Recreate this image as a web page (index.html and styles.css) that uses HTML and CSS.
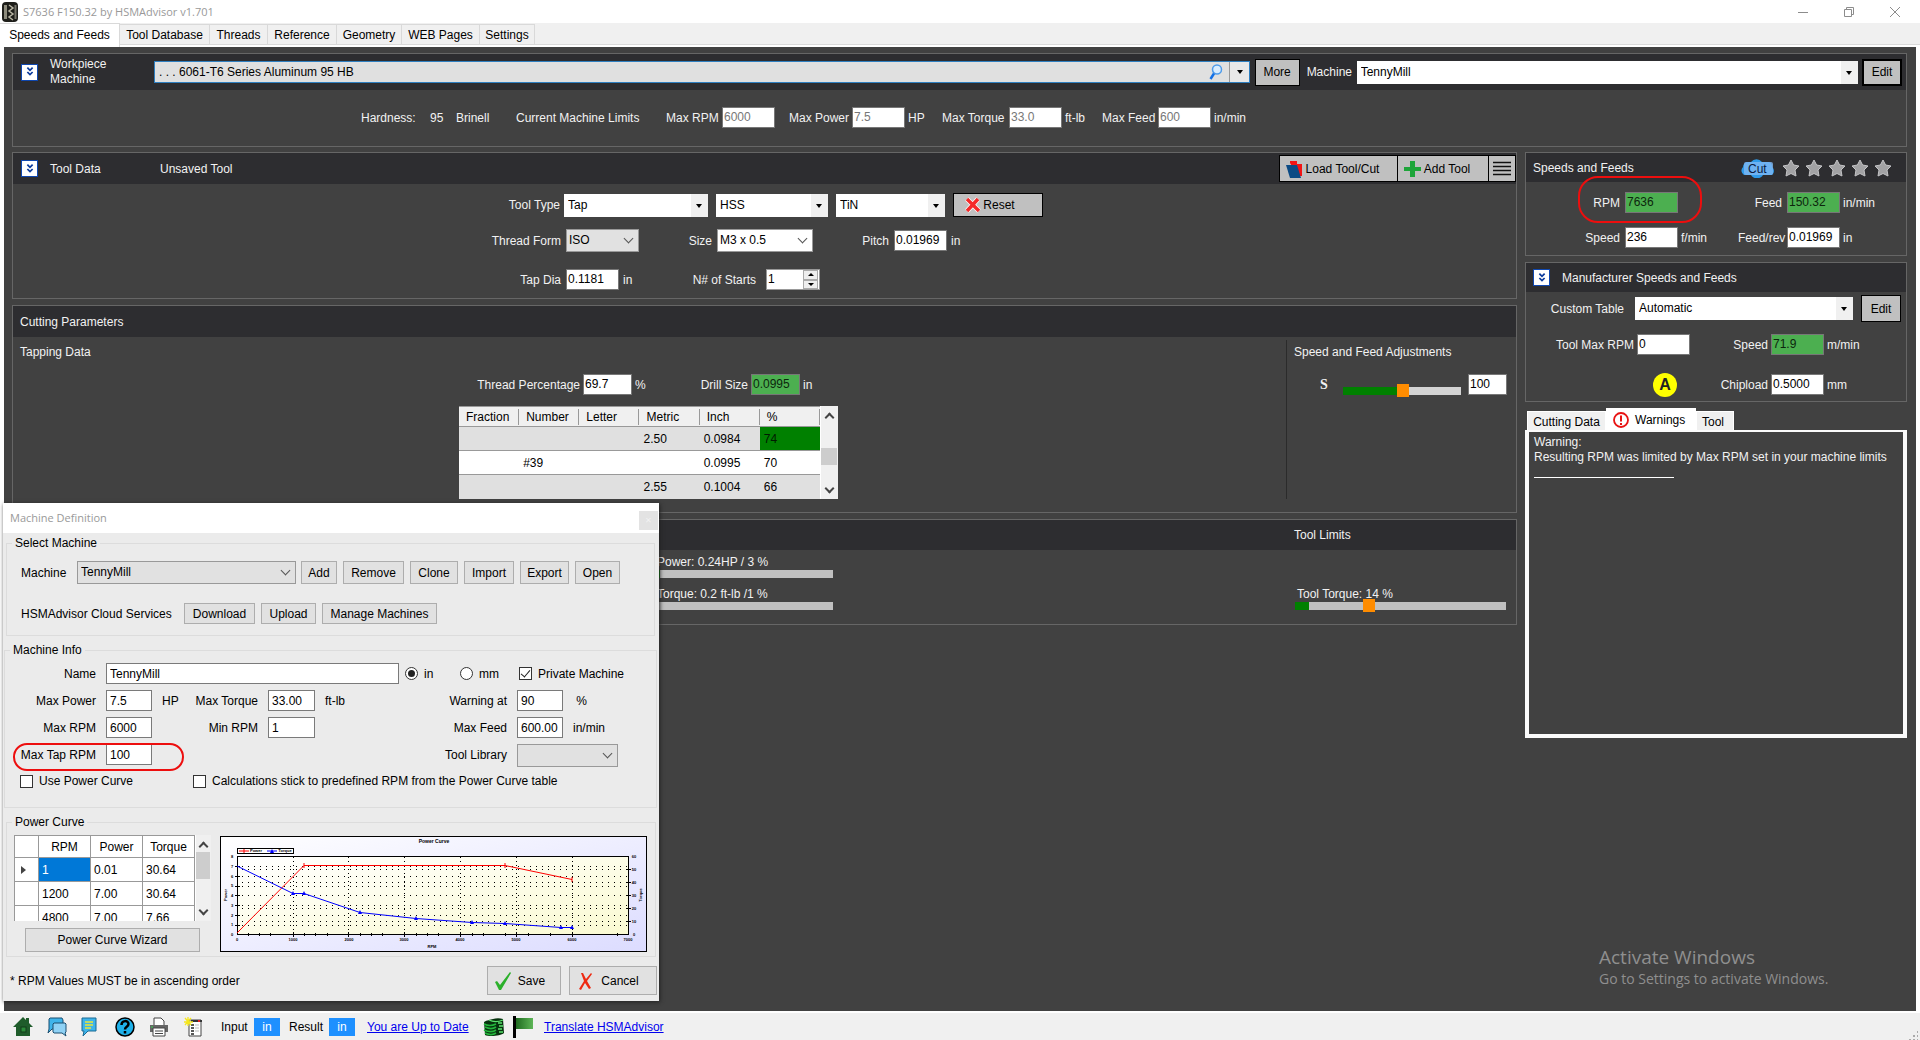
FILE: index.html
```html
<!DOCTYPE html>
<html lang="en">
<head>
<meta charset="utf-8">
<title>S7636 F150.32 by HSMAdvisor v1.701</title>
<link rel="stylesheet" href="styles.css">
</head>
<body>
<svg class="defs" aria-hidden="true">
  <symbol id="chev" viewBox="0 0 16 16"><path d="M5 3l3 3 3-3M5 8l3 3 3-3" fill="none" stroke="#0a3a9c" stroke-width="2"/></symbol>
  <symbol id="star" viewBox="0 0 18 18"><path d="M9 1l2.600 5 5.400 1-4 4 1 6-5-2.500L4 17l1-6-4-4 5.400-1z" fill="#a2a2a4" stroke="#c4c4c6" stroke-linejoin="round"/></symbol>
</svg>
<div class="app">
  <header class="titlebar">
    <svg class="app-icon" width="16" height="20" viewBox="0 0 16 20"><rect width="16" height="20" rx="4" fill="#1e1e1a"/><path d="M2 3h3v14H2z" fill="#8d8b7c"/><path d="M7 3l4 3-4 3 4 3-4 3 4 3" fill="none" stroke="#b9b6a4" stroke-width="1.500"/><path d="M13.500 3v14" stroke="#77756a" stroke-width="2"/></svg>
    <h1>S7636 F150.32 by HSMAdvisor v1.701</h1>
    <div class="window-buttons">
      <button aria-label="Minimize"><svg width="12" height="12"><path d="M1 6.500h10" stroke="#8c8c8c"/></svg></button>
      <button aria-label="Restore"><svg width="12" height="12"><path d="M1.500 3.500h7v7h-7zM3.500 3v-1.500h7v7h-2" fill="none" stroke="#8c8c8c"/></svg></button>
      <button aria-label="Close"><svg width="12" height="12"><path d="M1 1l10 10M11 1L1 11" stroke="#8c8c8c"/></svg></button>
    </div>
  </header>

  <nav class="tabs">
    <a href="#" class="tab active t-speeds">Speeds and Feeds</a>
    <a href="#" class="tab t-db">Tool Database</a>
    <a href="#" class="tab t-threads">Threads</a>
    <a href="#" class="tab t-ref">Reference</a>
    <a href="#" class="tab t-geo">Geometry</a>
    <a href="#" class="tab t-web">WEB Pages</a>
    <a href="#" class="tab t-set">Settings</a>
  </nav>

  <main class="workspace">
    <section class="panel workpiece">
      <div class="panel-head">
        <button class="fold" aria-label="Collapse"><svg width="14" height="14"><use href="#chev"/></svg></button>
        <h2>Workpiece<br>Machine</h2>
        <div class="search">
          <input type="text" aria-label="Material" value=". . . 6061-T6 Series Aluminum 95 HB">
          <svg width="16" height="18" viewBox="0 0 16 18"><circle cx="9" cy="6.500" r="4.500" fill="#d8ecff" stroke="#4d9bea" stroke-width="1.500"/><path d="M6 10.500L2.500 16" stroke="#1471e6" stroke-width="2.500"/></svg>
          <button class="drop" aria-label="Open material list"></button>
        </div>
        <button class="btn w-more">More</button>
        <label class="machine-label" for="machine">Machine</label>
        <span class="combo tri machine-pick"><select id="machine"><option>TennyMill</option></select></span>
        <button class="btn w-edit focus">Edit</button>
      </div>
      <div class="limits">
        <span>Hardness:</span><span>95</span><span>Brinell</span><span>Current Machine Limits</span>
        <label for="l1">Max RPM</label><input id="l1" type="text" value="6000" disabled><span></span>
        <label for="l2">Max Power</label><input id="l2" type="text" value="7.5" disabled><span>HP</span>
        <label for="l3">Max Torque</label><input id="l3" type="text" value="33.0" disabled><span>ft-lb</span>
        <label for="l4">Max Feed</label><input id="l4" type="text" value="600" disabled><span>in/min</span>
      </div>
    </section>

    <div class="columns">
      <div class="left">
        <section class="panel">
          <div class="panel-head head-tool">
            <button class="fold" aria-label="Collapse"><svg width="14" height="14"><use href="#chev"/></svg></button>
            <h2>Tool Data</h2>
            <span class="grow">Unsaved Tool</span>
            <div class="btn-group">
              <button class="btn w-load"><svg width="17" height="18" viewBox="0 0 17 18"><path d="M4 3l0-2 7 0 0 3 5 0 0 12-4 0z" fill="#f21414"/><path d="M0 5l11 0 4 13-11 0z" fill="#0b4a84"/></svg>Load Tool/Cut</button>
              <button class="btn w-add"><svg width="17" height="18" viewBox="0 0 17 18"><path d="M6 1h5v6h6v4h-6v6H6v-6H0V7h6z" fill="#1ea53a"/></svg>Add Tool</button>
              <button class="btn w-menu" aria-label="Menu"><svg width="18" height="15"><path d="M0 1.500h18M0 5.500h18M0 9.500h18M0 13.500h18" stroke="#111" stroke-width="1.500"/></svg></button>
            </div>
          </div>
          <div class="tool-body">
            <div class="tool-row r1">
              <label for="tt">Tool Type</label>
              <span class="combo tri"><select id="tt"><option>Tap</option></select></span>
              <span class="combo tri"><select aria-label="Tool material"><option>HSS</option></select></span>
              <span class="combo tri"><select aria-label="Coating"><option>TiN</option></select></span>
              <button class="btn w-reset"><svg width="16" height="16" viewBox="0 0 16 16"><path d="M2 2l12 12M13 2L2 14" stroke="#fff" stroke-width="5"/><path d="M2 2l12 12M13 2L2 14" stroke="#f52a2a" stroke-width="3.500"/></svg>Reset</button>
            </div>
            <div class="tool-row r2">
              <label for="tf">Thread Form</label>
              <span class="combo flat gray"><select id="tf"><option>ISO</option></select></span>
              <label for="sz">Size</label>
              <span class="combo flat"><select id="sz"><option>M3 x 0.5</option></select></span>
              <label for="pt">Pitch</label>
              <input id="pt" type="text" value="0.01969"><span>in</span>
            </div>
            <div class="tool-row r3">
              <label for="td">Tap Dia</label>
              <input id="td" type="text" value="0.1181"><span>in</span>
              <label for="ns">N# of Starts</label>
              <span class="spinner"><input id="ns" type="text" value="1"><span class="spin-buttons"><button class="up" aria-label="More"></button><button class="down" aria-label="Less"></button></span></span>
            </div>
          </div>
        </section>

        <section class="panel">
          <div class="panel-head head-cut"><h2>Cutting Parameters</h2></div>
          <div class="cut-body">
            <div class="tapping">
              <h3>Tapping Data</h3>
              <div class="tap-row">
                <label for="tp">Thread Percentage</label><input id="tp" type="text" value="69.7"><span>%</span>
                <label for="ds">Drill Size</label><input id="ds" class="result" type="text" value="0.0995"><span>in</span>
              </div>
              <div class="drills">
                <table>
                  <thead><tr><th>Fraction</th><th>Number</th><th>Letter</th><th>Metric</th><th>Inch</th><th>%</th></tr></thead>
                  <tbody>
                    <tr><td></td><td></td><td></td><td>2.50</td><td>0.0984</td><td class="best">74</td></tr>
                    <tr><td></td><td>#39</td><td></td><td></td><td>0.0995</td><td>70</td></tr>
                    <tr><td></td><td></td><td></td><td>2.55</td><td>0.1004</td><td>66</td></tr>
                  </tbody>
                </table>
                <div class="scroll mid"><i></i></div>
              </div>
            </div>
            <div class="adjust">
              <h3>Speed and Feed Adjustments</h3>
              <div class="adjust-row">
                <label for="sl">S</label>
                <input id="sl" class="slider half" type="range" value="51">
                <input type="text" aria-label="Speed percent" value="100">
              </div>
            </div>
          </div>
        </section>

        <section class="panel gauges">
          <div class="panel-head head-gauge"><h2>Tool Limits</h2></div>
          <div class="gauge-body">
            <div class="gauge-col">
              <label for="g1">Power: 0.24HP / 3 %</label><progress id="g1" max="100" value="3"></progress>
              <label for="g2">Torque: 0.2 ft-lb /1 %</label><progress id="g2" max="100" value="1"></progress>
            </div>
            <div class="gauge-tool">
              <label for="g3">Tool Torque: 14 %</label>
              <input id="g3" class="slider low" type="range" value="34">
            </div>
          </div>
        </section>
      </div>

      <aside class="right">
        <section class="panel results">
          <div class="panel-head head-side">
            <h2>Speeds and Feeds</h2>
            <span class="cut"><svg width="34" height="20" viewBox="0 0 34 20"><path d="M3 17a5 5 0 0 1-1-8 5 5 0 0 1 5-5h3a7 7 0 0 1 11 0h7a5 5 0 0 1 3 5 5 5 0 0 1 0 8h-9a7 7 0 0 1-12 0z" fill="#2f9bea"/><rect x="3" y="4" width="29" height="13" rx="2" fill="#80b8f2" opacity=".8"/></svg><b>Cut</b></span>
            <span class="stars"><svg width="18" height="18"><use href="#star"/></svg><svg width="18" height="18"><use href="#star"/></svg><svg width="18" height="18"><use href="#star"/></svg><svg width="18" height="18"><use href="#star"/></svg><svg width="18" height="18"><use href="#star"/></svg></span>
          </div>
          <div class="side-grid sf">
            <label for="a1">RPM</label><input id="a1" class="result" type="text" value="7636"><span></span>
            <label for="a2">Feed</label><input id="a2" class="result" type="text" value="150.32"><span>in/min</span>
            <label for="a3">Speed</label><input id="a3" type="text" value="236"><span>f/min</span>
            <label for="a4">Feed/rev</label><input id="a4" type="text" value="0.01969"><span>in</span>
          </div>
          <div class="mark mark-rpm"></div>
        </section>

        <section class="panel">
          <div class="panel-head head-side">
            <button class="fold" aria-label="Collapse"><svg width="14" height="14"><use href="#chev"/></svg></button>
            <h2>Manufacturer Speeds and Feeds</h2>
          </div>
          <div class="custom">
            <label for="ct">Custom Table</label>
            <span class="combo tri"><select id="ct"><option>Automatic</option></select></span>
            <button class="btn w-edit">Edit</button>
          </div>
          <div class="side-grid mf">
            <label for="b1">Tool Max RPM</label><input id="b1" type="text" value="0">
            <label for="b2">Speed</label><input id="b2" class="result" type="text" value="71.9"><span>m/min</span>
            <button class="auto">A</button>
            <label for="b3">Chipload</label><input id="b3" type="text" value="0.5000"><span>mm</span>
          </div>
        </section>

        <section class="messages">
          <div class="msg-tabs">
            <a href="#" class="m-cut">Cutting Data</a>
            <a href="#" class="m-warn active"><svg width="16" height="16" viewBox="0 0 16 16"><circle cx="8" cy="8" r="7" fill="#fff" stroke="#e81313" stroke-width="1.800"/><path d="M8 3.500v6M8 11v2" stroke="#e81313" stroke-width="2"/></svg>Warnings</a>
            <a href="#" class="m-tool">Tool</a>
          </div>
          <div class="msg-body">
            <p>Warning:</p>
            <p>Resulting RPM was limited by Max RPM set in your machine limits</p>
            <hr>
          </div>
        </section>
      </aside>
    </div>

    <div class="activate"><strong>Activate Windows</strong><span>Go to Settings to activate Windows.</span></div>
  </main>

  <footer class="status">
    <svg width="20" height="20" viewBox="0 0 20 20"><path d="M0 10L10 0l3 3V1h3v5l4 4h-3v9H3v-9z" fill="#1f5c2b"/><rect x="8" y="10" width="5" height="5" fill="#2c8a3a" stroke="#123d1a"/></svg>
    <svg width="20" height="20" viewBox="0 0 20 20"><path d="M3 1h12l1 2v9H5l-4 4 1-4V2z" fill="#3fb4ea" stroke="#1b4f70"/><path d="M7 6h11l1 1v8l-1 1 1 3-4-3H7l-1-1V7z" fill="#8fd2f5" stroke="#1b4f70"/></svg>
    <svg width="16" height="20" viewBox="0 0 16 20"><path d="M1 1h14v13H7l-5 5 1-5H1z" fill="#3fb4ea" stroke="#1b6a94"/><path d="M4 5h8M4 8h8M4 11h6" stroke="#f0e635" stroke-width="1.500"/></svg>
    <svg width="20" height="20" viewBox="0 0 20 20"><circle cx="10" cy="10" r="9" fill="#1fb1ea" stroke="#000" stroke-width="1.500"/><path d="M6.500 8c0-5 7-5 7-1 0 3-3.500 2.500-3.500 5.500M10 14v2.500" fill="none" stroke="#000" stroke-width="2.500"/></svg>
    <svg width="20" height="20" viewBox="0 0 20 20"><path d="M5 8V1h7l3 3v4" fill="#fff" stroke="#444"/><path d="M1 8h18v7H1z" fill="#666"/><path d="M2 10h2" stroke="#2fd14a"/><path d="M4 11h12v8H4z" fill="#fff" stroke="#444"/><path d="M6 14h8M6 16.500h8" stroke="#444"/></svg>
    <svg width="20" height="20" viewBox="0 0 20 20"><path d="M6 3h12v16H6z" fill="#fff" stroke="#444"/><path d="M8 3h11v2H8z" fill="#333"/><path d="M15 3h2v2h-2z" fill="#e02020"/><path d="M8 8h3M8 11h3M8 14h3M8 17h3" stroke="#222" stroke-width="1.500"/><path d="M12 8h4M12 11h4M12 14h4" stroke="#bbb"/><path d="M5 0v9M1 5h9M2 1l6 7M8 1L2 8" stroke="#f6e71c" stroke-width="1.300"/></svg>
    <span class="s-input">Input</span><button class="unit">in</button>
    <span class="s-result">Result</span><button class="unit">in</button>
    <a href="#" class="s-update">You are Up to Date</a>
    <svg width="22" height="20" viewBox="0 0 22 20"><path d="M1 5c3-2 6-2 9-3 3-1 7-1 10 0l1 14c-3 3-15 4-19 2z" fill="#06330e"/><path d="M1 7c4 2 8 2 12 0M2 10c4 2 8 2 11 0M1 13c4 2 9 2 12 0M2 16c4 2 8 2 11 0" fill="none" stroke="#23b53c" stroke-width="1.700"/><path d="M6 3c4 2 9 2 14 0M15 6h4M16 9h4M15 12h4M16 15h4" fill="none" stroke="#5be36d" stroke-width="1.300"/></svg>
    <svg class="flag" width="20" height="22" viewBox="0 0 20 22"><defs><linearGradient id="fl"><stop offset="0" stop-color="#1f6b20"/><stop offset="1" stop-color="#5db556"/></linearGradient></defs><path d="M1.500 0v22" stroke="#000" stroke-width="3"/><path d="M3 2h17v11H3z" fill="url(#fl)"/></svg>
    <a href="#" class="s-translate">Translate HSMAdvisor</a>
    <span class="grip"></span>
  </footer>

  <div class="dialog" role="dialog" aria-label="Machine Definition">
    <div class="dialog-title"><span>Machine Definition</span><button aria-label="Close">×</button></div>
    <form class="dialog-body">
      <fieldset class="fs-select">
        <legend>Select Machine</legend>
        <div class="line">
          <label for="dm">Machine</label>
          <span class="combo flat gray"><select id="dm"><option>TennyMill</option></select></span>
          <button type="button" class="k-add">Add</button><button type="button" class="k-remove">Remove</button><button type="button" class="k-clone">Clone</button><button type="button" class="k-import">Import</button><button type="button" class="k-export">Export</button><button type="button" class="k-open">Open</button>
        </div>
        <div class="line cloud">
          <span>HSMAdvisor Cloud Services</span>
          <button type="button" class="k-down">Download</button><button type="button" class="k-up">Upload</button><button type="button" class="k-manage">Manage Machines</button>
        </div>
      </fieldset>

      <fieldset class="fs-info">
        <legend>Machine Info</legend>
        <div class="name-row">
          <label for="nm">Name</label><input id="nm" type="text" value="TennyMill">
          <label class="opt o-in"><input type="radio" name="u" checked>in</label>
          <label class="opt o-mm"><input type="radio" name="u">mm</label>
          <label class="opt"><input type="checkbox" checked>Private Machine</label>
        </div>
        <div class="info-grid">
          <label for="i1">Max Power</label><input id="i1" type="text" value="7.5"><span>HP</span>
          <label for="i2">Max Torque</label><input id="i2" type="text" value="33.00"><span>ft-lb</span>
          <label for="i3">Warning at</label><input id="i3" type="text" value="90"><span>&nbsp;%</span>
          <label for="i4">Max RPM</label><input id="i4" type="text" value="6000"><span></span>
          <label for="i5">Min RPM</label><input id="i5" type="text" value="1"><span></span>
          <label for="i6">Max Feed</label><input id="i6" type="text" value="600.00"><span>in/min</span>
          <label for="i7">Max Tap RPM</label><input id="i7" type="text" value="100">
          <label for="i8" class="lib">Tool Library</label><span class="combo flat gray lib-pick"><select id="i8"><option></option></select></span>
        </div>
        <div class="check-row">
          <label class="opt"><input type="checkbox">Use Power Curve</label>
          <label class="opt"><input type="checkbox">Calculations stick to predefined RPM from the Power Curve table</label>
        </div>
        <div class="mark mark-tap"></div>
      </fieldset>

      <fieldset class="fs-curve">
        <legend>Power Curve</legend>
        <div class="curve-left">
          <div class="curve-grid">
            <div class="clip">
              <table>
                <thead><tr><th></th><th>RPM</th><th>Power</th><th>Torque</th></tr></thead>
                <tbody>
                  <tr><td class="cur"></td><td class="sel">1</td><td>0.01</td><td>30.64</td></tr>
                  <tr><td></td><td>1200</td><td>7.00</td><td>30.64</td></tr>
                  <tr><td></td><td>4800</td><td>7.00</td><td>7.66</td></tr>
                </tbody>
              </table>
            </div>
            <div class="scroll top"><i></i></div>
          </div>
          <button type="button" class="k-wizard">Power Curve Wizard</button>
        </div>
        <svg class="chart" width="427" height="116" viewBox="0 0 427 116" font-family="Liberation Sans, Arial, sans-serif" font-size="4" font-weight="bold" text-anchor="middle">
          <defs>
            <linearGradient id="bg" x1="0" y1="0" x2="1" y2="1"><stop offset="0" stop-color="#fff"/><stop offset="1" stop-color="#dcdcff"/></linearGradient>
            <linearGradient id="pl" x1="0" y1="0" x2="1" y2="1"><stop offset="0" stop-color="#fff"/><stop offset="1" stop-color="#fafad2"/></linearGradient>
          </defs>
          <rect x=".5" y=".5" width="426" height="115" fill="url(#bg)" stroke="#000"/>
          <text x="214" y="7" font-size="5">Power Curve</text>
          <rect x="17.500" y="12.500" width="56" height="5" fill="#fff" stroke="#000"/>
          <path d="M19 15h10M24 13v4" stroke="#f00"/><text x="36" y="16">Power</text>
          <path d="M47 15h10" stroke="#00f"/><path d="M50 17l2-4 2 4z" fill="#00f"/><text x="65" y="16">Torque</text>
          <rect x="17.500" y="20.500" width="391" height="78" fill="url(#pl)" stroke="#000"/>
          <path stroke="#000" stroke-dasharray="1 5" d="M22 30.500h386M22 40.500h386M22 50.500h386M22 59.500h386M22 69.500h386M22 79.500h386M22 89.500h386M22 33.500h386M22 46.500h386M22 72.500h386M22 85.500h386"/>
          <path stroke="#000" stroke-dasharray="1 3" d="M73.500 21v77M128.500 21v77M184.500 21v77M240.500 21v77M296.500 21v77M352.500 21v77"/>
          <path stroke="#000" d="M28.500 97v3M39.500 97v3M50.500 97v3M73.500 96v5M84.500 97v3M95.500 97v3M107.500 97v3M128.500 96v5M140.500 97v3M151.500 97v3M162.500 97v3M184.500 96v5M196.500 97v3M207.500 97v3M218.500 97v3M240.500 96v5M252.500 97v3M263.500 97v3M285.500 97v3M296.500 96v5M308.500 97v3M330.500 97v3M352.500 96v5M397.500 97v3M15 30.500h5M15 40.500h5M15 50.500h5M15 59.500h5M15 69.500h5M15 79.500h5M15 89.500h5M406 33.500h5M406 46.500h5M406 59.500h5M406 72.500h5M406 85.500h5"/>
          <path d="M17 97L84 29.500h201L352 43.500M84 27v5M285 27v5M352 41v5" fill="none" stroke="#f00"/>
          <path d="M17 30L73 57.500H84L140 76.500L196 82.500L252 86.500L285 87.500L341 91.500H353" fill="none" stroke="#00f"/>
          <path d="M71 59l2-4 2 4zM82 59l2-4 2 4zM138 78l2-4 2 4zM194 84l2-4 2 4zM250 88l2-4 2 4zM283 89l2-4 2 4zM339 93l2-4 2 4zM350 93l2-4 2 4z" fill="#00f"/>
          <text x="17" y="105">0</text><text x="73" y="105">1000</text><text x="129" y="105">2000</text><text x="184" y="105">3000</text><text x="240" y="105">4000</text><text x="296" y="105">5000</text><text x="352" y="105">6000</text><text x="408" y="105">7000</text>
          <text x="212" y="112">RPM</text>
          <text x="12" y="22">8</text><text x="12" y="32">7</text><text x="12" y="42">6</text><text x="12" y="51">5</text><text x="12" y="61">4</text><text x="12" y="71">3</text><text x="12" y="81">2</text><text x="12" y="90">1</text><text x="12" y="100">0</text>
          <text x="414" y="22">60</text><text x="414" y="35">50</text><text x="414" y="48">40</text><text x="414" y="61">30</text><text x="414" y="74">20</text><text x="414" y="87">10</text><text x="414" y="100">0</text>
          <text transform="translate(7 59) rotate(-90)">Power</text><text transform="translate(422 59) rotate(-90)">Torque</text>
        </svg>
      </fieldset>

      <div class="dialog-foot">
        <span>* RPM Values MUST be in ascending order</span>
        <button type="button" class="k-save"><svg width="17" height="20" viewBox="0 0 17 20"><path d="M0 11l2-1 3 4L15 1l1 1L6 19H4z" fill="#2bb02b"/></svg>Save</button>
        <button type="button" class="k-cancel"><svg width="14" height="18" viewBox="0 0 14 18"><path d="M2 1l2 0 3 6 5-6 1 1-5 7 4 7-2 1-4-6-4 7-2-1 5-8z" fill="#ee2a12"/></svg>Cancel</button>
      </div>
    </form>
  </div>
</div>
</body>
</html>
```

FILE: styles.css
```css
* { box-sizing: border-box; margin: 0; padding: 0; }
body { font: 12px/16px "Liberation Sans", Arial, sans-serif; color: #000; background: #f0f0f0; }
input, select, button { font: inherit; color: inherit; border-radius: 0; min-width: 0; }
h1, h2, h3 { font-size: 12px; font-weight: normal; }
label, span, a, button { white-space: nowrap; }
svg { flex: none; }
.defs { position: absolute; width: 0; height: 0; }
.app { position: relative; min-height: 100vh; display: flex; flex-direction: column; }

/* Title bar and page tabs */
.titlebar { display: flex; align-items: center; height: 23px; background: #fff; padding: 0 19px 0 2px; }
.titlebar h1 { flex: 1; margin-left: 5px; font-family: "Open Sans", "Noto Sans", sans-serif; font-size: 11px; color: #999; }
.window-buttons { display: flex; gap: 34px; }
.window-buttons button { display: flex; width: 12px; height: 12px; border: 0; background: none; }
.tabs { display: flex; align-items: flex-end; height: 24px; border-bottom: 2px solid #fff; box-shadow: inset 0 -1px #dadada; }
.tab { height: 20px; line-height: 20px; text-align: center; text-decoration: none; color: #000; border: 1px solid #d9d9d9; border-width: 1px 1px 0 0; margin-bottom: 1px; }
.tab.active { height: 24px; line-height: 22px; margin-bottom: -2px; background: #fff; }
.t-speeds { width: 120px; }
.t-db { width: 90px; }
.t-threads { width: 58px; }
.t-ref { width: 69px; }
.t-geo { width: 65px; }
.t-web { width: 78px; }
.t-set { width: 55px; }

/* Panels */
.workspace { position: relative; flex: 1; background: #414141; color: #f2f2f2; border: solid #fff; border-width: 0 4px 2px; padding: 6px 9px 0 8px; }
.panel { position: relative; border: 1px solid #666; }
.panel-head { display: flex; align-items: center; background: #2d2d30; padding: 0 4px 0 8px; }
.fold { display: flex; align-items: center; justify-content: center; width: 17px; height: 17px; background: #fff; border: 1px solid #0f47af; flex: none; }
.fold + h2 { margin-left: 12px; }
.workspace input[type=text] { width: 53px; height: 21px; border: 1px solid #777; background: #fff; color: #000; padding: 0 1px 2px; }
.workspace input:disabled { color: #777; }
.workspace input.result { background: #4caf50; color: #0d260d; }
.btn { display: flex; align-items: center; justify-content: center; height: 27px; background: #c0c0c0; color: #000; border: 1px solid #000; flex: none; }
.btn.focus { border-width: 2px; }
.w-more { width: 45px; }
.w-edit { width: 40px; }
.w-load { width: 119px; gap: 3px; padding-right: 12px; }
.w-add { width: 92px; gap: 3px; padding-right: 12px; }
.w-menu { width: 28px; }
.w-reset { width: 90px; height: 24px; gap: 2px; padding-right: 16px; }

/* Drop-downs */
.combo { position: relative; display: block; height: 23px; }
.combo select { appearance: none; display: block; width: 100%; height: 100%; border: 0; background: #fff; color: #000; padding: 0 20px 1px 4px; }
.combo.tri select { background: linear-gradient(#f0f0f0, #f0f0f0) right / 17px 100% no-repeat #fff; }
.combo.tri::after, .drop::after { content: ""; position: absolute; right: 6px; top: 10px; border: 3px solid transparent; border-top: 4px solid #000; border-bottom: 0; }
.combo.flat select { border: 1px solid #999; padding-left: 2px; }
.combo.gray select { background: #e1e1e1; }
.combo.flat::after { content: ""; position: absolute; right: 7px; top: 6px; width: 6px; height: 6px; border: solid #555; border-width: 0 1px 1px 0; transform: rotate(45deg); }

/* Workpiece panel */
.workpiece { height: 94px; margin-bottom: 5px; }
.workpiece .panel-head { height: 36px; }
.workpiece h2 { width: 104px; line-height: 15px; }
.search { position: relative; display: flex; align-items: center; flex: 1095 1 0; height: 22px; background: #e0e0e0; border: 1px solid #2f7fc0; margin-right: 5px; }
.workspace .search input { flex: 1; height: 20px; border: 0; background: none; padding: 0 4px; }
.drop { position: relative; width: 20px; height: 20px; margin-left: 5px; border: 0; border-left: 1px solid #999; background: #e8e8e8; }
.drop::after { top: 8px; }
.machine-label { margin: 0 4px 0 7px; width: 46px; }
.machine-pick { flex: 502 1 0; margin-right: 4px; }
.limits { display: grid; grid-template-columns: 69px 26px 60px 150px 56px 53px 14px 63px 53px 37px 67px 53px 40px 56px 53px 50px; align-items: center; padding: 17px 0 0 348px; }
.limits input + span { padding-left: 3px; }

.columns { display: grid; grid-template-columns: minmax(0, 1fr) 382px; gap: 8px; align-items: start; }
.left { display: grid; gap: 6px; }
.right { display: grid; gap: 6px; }

/* Tool data */
.head-tool { height: 31px; padding-right: 0; }
.head-tool h2 { width: 110px; }
.grow { flex: 1; }
.btn-group { display: flex; }
.btn-group .btn + .btn { margin-left: -1px; }
.tool-body { padding: 9px 0 8px; }
.tool-row { display: grid; align-items: center; justify-content: start; }
.tool-row label { text-align: right; padding-right: 5px; }
.tool-row > input + span { padding-left: 4px; }
.r1 { grid-template-columns: 543px 144px 112px 109px 90px; column-gap: 8px; }
.r1 label { padding: 0; margin-right: -4px; }
.r2 { grid-template-columns: 553px 73px 78px 96px 81px 53px 20px; margin-top: 12px; }
.r3 { grid-template-columns: 553px 53px 20px 126px 54px; margin-top: 17px; }
.r3 label + .spinner { margin-left: 1px; }
.r3 span + label { padding-right: 9px; }
.spinner { display: flex; width: 54px; height: 21px; background: #fff; border: 1px solid #999; }
.workspace .spinner input { width: 36px; height: 19px; border: 0; }
.spin-buttons { display: grid; width: 15px; }
.spin-buttons button { display: flex; align-items: center; justify-content: center; border: 1px solid #aaa; background: #eee; }
.spin-buttons button::after { content: ""; border: 3px solid transparent; }
.spin-buttons .up::after { border-top: 0; border-bottom-color: #000; }
.spin-buttons .down::after { border-bottom: 0; border-top-color: #000; }

/* Cutting parameters */
.head-cut { height: 31px; padding-left: 7px; }
.cut-body { display: grid; grid-template-columns: minmax(0, 1fr) 230px; padding: 3px 0 13px; }
.tapping { padding: 4px 0 0 7px; }
.tap-row { display: grid; grid-template-columns: 104px 49px 55px 55px 49px 20px; column-gap: 3px; align-items: center; margin: 14px 0 11px 456px; }
.tap-row label { text-align: right; }
.workspace .tap-row input { width: 49px; }
.drills { display: flex; width: 379px; margin-left: 439px; }
table { border-collapse: collapse; table-layout: fixed; color: #000; }
.drills table { width: 361px; background: #fff; }
.drills th { height: 20px; font-weight: normal; text-align: left; padding-left: 7px; background: linear-gradient(#999, #999) right / 1px 16px no-repeat #f0f0f0; border: solid #999; border-width: 1px 0; }
.drills td { height: 24px; padding-left: 4px; border-bottom: 1px solid #999; }
.drills tbody tr:nth-child(odd) { background: #e0e0e0; }
.drills tr:last-child td { border-bottom: 0; }
.drills td.best { background: #008000; color: #001a00; }
.scroll { position: relative; width: 18px; background: #f0f0f0; border-left: 1px solid #fff; }
.scroll i { position: absolute; left: 0; right: 1px; height: 17px; background: #cdcdcd; }
.scroll.mid i { top: 42px; }
.scroll::before, .scroll::after { content: ""; position: absolute; left: 5px; width: 5px; height: 5px; border: solid #444; border-width: 2px 0 0 2px; transform: rotate(45deg); }
.scroll::before { top: 8px; }
.scroll::after { bottom: 7px; transform: rotate(225deg); }
.adjust { border-left: 1px solid #2b2b2b; padding: 4px 0 0 7px; }
.adjust-row { display: grid; grid-template-columns: 22px 118px 39px; column-gap: 7px; align-items: center; padding-left: 20px; margin-top: 14px; }
.adjust-row label { padding-left: 6px; font: bold 14px/20px "Liberation Serif", serif; }
.workspace .adjust-row input[type=text] { width: 39px; }
.slider { appearance: none; display: block; width: 100%; height: 8px; background: #d3d3d3; }
.slider::-webkit-slider-thumb { appearance: none; width: 12px; height: 13px; background: #ff8c00; }
.adjust-row .slider { margin-top: 12px; }
.slider.half { background: linear-gradient(90deg, #008000 50%, #d3d3d3 50%); }
.slider.low { background: linear-gradient(90deg, #008000 14px, #c0c0c0 14px); }

/* Gauges */
.head-gauge { height: 30px; justify-content: flex-end; padding: 0; }
.head-gauge h2 { width: 222px; }
.gauge-body { display: grid; grid-template-columns: 178px 211px; justify-content: space-between; padding: 4px 10px 6px 642px; }
.gauge-col, .gauge-tool { display: grid; grid-auto-rows: 16px; align-content: start; }
.gauge-col label, .gauge-tool label { padding-left: 2px; }
.gauge-tool { padding-top: 32px; }
progress { appearance: none; display: block; width: 100%; height: 8px; border: 0; background: #c0c0c0; }
progress::-webkit-progress-bar { background: #c0c0c0; }
progress::-webkit-progress-value { background: #008000; }

/* Side column */
.head-side { height: 29px; padding: 0 4px 0 7px; }
.results h2 { flex: 1; }
.cut { position: relative; display: flex; margin-right: 7px; }
.cut b { position: absolute; left: 7px; top: 3px; font-weight: normal; color: #0a1a40; }
.stars { display: flex; gap: 5px; padding-right: 10px; }
.side-grid { display: grid; align-items: center; }
.side-grid label { text-align: right; padding-right: 5px; }
.side-grid span { padding-left: 3px; }
.sf { grid-template-columns: 99px 53px 60px 49px 53px 1fr; row-gap: 14px; padding: 10px 0 7px; }
.mark { position: absolute; border: 2px solid #ed0e0e; pointer-events: none; }
.mark-rpm { left: 52px; top: 23px; width: 124px; height: 47px; border-radius: 20px; }
.custom { display: grid; grid-template-columns: 101px minmax(0, 1fr) 40px; column-gap: 8px; align-items: center; padding: 3px 5px 0 0; }
.custom label { text-align: right; padding-right: 3px; }
.mf { grid-template-columns: 111px 53px 81px 53px 1fr; row-gap: 19px; padding: 12px 0 6px; }
.mf label { padding-right: 3px; }
.auto { grid-column: 1 / 3; justify-self: end; width: 24px; height: 24px; margin: -2px 13px -2px 0; border: 0; border-radius: 50%; background: #ff0; color: #222; font: bold 16px/24px "Liberation Sans", Arial, sans-serif; }
.msg-tabs { display: flex; align-items: flex-end; height: 22px; padding-left: 2px; }
.msg-tabs a { height: 19px; line-height: 20px; background: #f0f0f0; color: #000; text-decoration: none; border: 1px solid #fff; border-bottom: 0; text-align: center; }
.msg-tabs a.active { display: flex; align-items: center; height: 22px; background: #fff; gap: 6px; padding-left: 6px; }
.m-cut { width: 79px; }
.m-warn { width: 90px; }
.m-tool { width: 38px; padding-right: 4px; }
.msg-body { height: 308px; border: 4px solid #fafafa; border-top-width: 2px; padding: 3px 5px; }
.msg-body p { line-height: 15px; }
.msg-body hr { width: 140px; border: 0; border-top: 1px solid #fff; margin-top: 12px; }
.activate { position: absolute; right: 81px; bottom: 22px; width: 236px; display: grid; font-family: "Open Sans", "Noto Sans", sans-serif; color: #8f8f8f; }
.activate strong { font-size: 19px; line-height: 24px; font-weight: normal; }
.activate span { font-size: 14px; line-height: 20px; }

/* Status bar */
.status { display: flex; align-items: center; height: 27px; padding: 0 2px 0 13px; }
.status svg { margin-right: 14px; }
.status svg:nth-of-type(3) { margin-right: 18px; }
.unit { width: 26px; height: 18px; border: 0; background: #1e90ff; color: #fff; }
.s-input { width: 33px; margin-left: 4px; }
.s-result { width: 40px; margin-left: 9px; }
.status a { color: #00e; }
.s-update { width: 116px; margin-left: 12px; }
.status svg:nth-of-type(7) { margin-right: 8px; }
.status svg.flag { margin-right: 11px; }
.grip { margin-left: auto; align-self: flex-end; width: 10px; height: 10px; background: radial-gradient(circle, #aaa 1px, transparent 1px) 0 0 / 4px 4px; clip-path: polygon(100% 0, 100% 100%, 0 100%); }

/* Machine dialog */
.dialog { position: absolute; left: 3px; top: 503px; width: 656px; background: #ebebeb; box-shadow: 1px 1px 4px #222; }
.dialog-title { display: flex; align-items: center; justify-content: space-between; height: 30px; padding: 0 1px 0 7px; background: #fff; color: #999; font-family: "Open Sans", "Noto Sans", sans-serif; font-size: 11px; }
.dialog-title button { width: 19px; height: 19px; margin-top: 4px; border: 0; background: #e3e3e3; color: #f2f2f2; }
.dialog-body { padding: 2px 2px 6px 1px; display: grid; gap: 6px; }
fieldset { position: relative; border: 1px solid #dcdcdc; min-width: 0; }
legend { margin-left: 5px; padding: 0 3px; }
.dialog-body button { display: flex; align-items: center; justify-content: center; height: 23px; border: 1px solid #adadad; background: #e1e1e1; flex: none; }
.dialog-body input[type=text] { height: 21px; border: 1px solid #7a7a7a; background: #fff; padding: 0 3px; }
.fs-select { margin: 0 2px; padding: 10px 14px 11px; }
.fs-select legend { margin-left: -9px; }
.line { display: flex; align-items: center; gap: 6px; }
.line label { width: 50px; }
.line .combo { width: 219px; margin-right: -1px; }
.line .combo select { padding-left: 3px; }
.cloud { margin-top: 19px; }
.cloud span { width: 157px; }
.dialog-body .cloud button { height: 21px; }
.k-add { width: 36px; }
.k-remove { width: 61px; }
.k-clone { width: 48px; }
.k-import { width: 50px; }
.k-export { width: 49px; }
.k-open { width: 45px; }
.k-down { width: 71px; }
.k-up { width: 55px; }
.k-manage { width: 115px; }
.fs-info { padding: 5px 0 18px; }
.fs-info > div > label:not(.opt) { text-align: right; }
.name-row { display: grid; grid-template-columns: 91px 293px 49px 57px auto; column-gap: 6px; align-items: center; }
.name-row #nm { margin-left: 4px; }
.name-row #nm { width: 293px; }
.opt { display: flex; align-items: center; gap: 6px; }
.o-in, .o-mm { margin-left: 4px; }
.opt input { appearance: none; position: relative; width: 13px; height: 13px; border: 1px solid #333; background: #fff; flex: none; }
.opt input[type=radio] { border-radius: 50%; }
.opt input[type=radio]:checked::after { content: ""; position: absolute; inset: 2px; border-radius: 50%; background: #222; }
.opt input[type=checkbox]:checked::after { content: ""; position: absolute; left: 3px; top: 0; width: 4px; height: 8px; border: solid #222; border-width: 0 1px 1px 0; transform: rotate(40deg); }
.info-grid { display: grid; grid-template-columns: 91px 46px 20px 66px 47px 100px 72px 46px 60px; column-gap: 10px; row-gap: 6px; align-items: center; margin-top: 6px; }
.info-grid .lib { grid-column: 7; }
.info-grid .lib-pick { grid-column: 8 / 10; width: 101px; margin-bottom: -2px; }
.check-row { display: flex; gap: 60px; padding: 8px 0 0 15px; }
.mark-tap { left: 8px; top: 85px; width: 171px; height: 28px; border-radius: 14px; }
.fs-curve { display: flex; gap: 9px; margin: 0 1px 0 2px; padding: 5px 8px 4px 7px; }
.fs-curve legend { margin-left: -2px; }
.curve-left { width: 197px; }
.curve-grid { display: flex; height: 86px; }
.clip { width: 181px; overflow: hidden; }
.clip table { width: 181px; background: #fff; }
.clip th, .clip td { height: 24px; border: 1px solid #999; font-weight: normal; }
.clip th { height: 22px; }
.clip td { padding-left: 3px; }
.clip th:first-child { width: 24px; }
.clip td.sel { background: #0078d7; color: #fff; }
.clip td.cur::after { content: ""; display: block; width: 0; margin-left: 3px; border: 4px solid transparent; border-left: 5px solid #444; border-right: 0; }
.scroll.top { width: 16px; }
.scroll.top i { top: 17px; height: 27px; }
.scroll.top::before, .scroll.top::after { left: 4px; }
.dialog-body .k-wizard { width: 175px; height: 24px; margin: 7px 0 0 11px; }
.chart { margin-top: 1px; }
.dialog-foot { display: flex; align-items: center; gap: 8px; padding: 3px 0 0 6px; }
.dialog-foot span { flex: 1; }
.dialog-body .dialog-foot button { height: 29px; }
.dialog-body .k-save { width: 74px; gap: 6px; padding-right: 8px; }
.dialog-body .k-cancel { width: 88px; gap: 8px; padding-right: 8px; }
```
